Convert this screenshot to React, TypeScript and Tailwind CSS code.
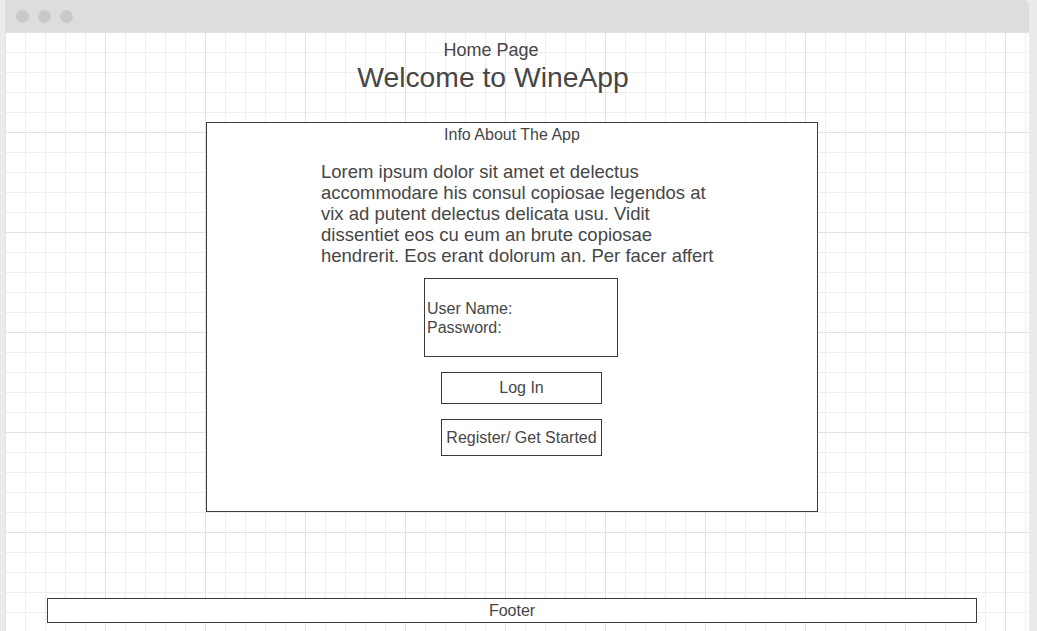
// Home page wireframe mockup (WineApp)

const lorem =
  "Lorem ipsum dolor sit amet et delectus accommodare his consul copiosae legendos at vix ad putent delectus delicata usu. Vidit dissentiet eos cu eum an brute copiosae hendrerit. Eos erant dolorum an. Per facer affert";

function TitleBar() {
  return (
    <div className="h-[32px] shrink-0 bg-[#dddddd] rounded-tr-[6px] flex items-center gap-[9px] pl-[11px]">
      <span className="w-[13px] h-[13px] rounded-full bg-[#c9c9c9]" />
      <span className="w-[13px] h-[13px] rounded-full bg-[#c9c9c9]" />
      <span className="w-[13px] h-[13px] rounded-full bg-[#c9c9c9]" />
    </div>
  );
}

export default function App() {
  return (
    <div
      className="w-[1037px] h-[631px] overflow-hidden bg-[#ebebeb] flex text-[#464646]"
      style={{ fontFamily: '"Liberation Sans", Arial, sans-serif' }}
    >
      <div className="ml-[5px] w-[1024px] h-full flex flex-col">
        <TitleBar />

        {/* ── Canvas with grid ── */}
        <div className="flex-1 flex flex-col bg-white bg-[image:linear-gradient(to_right,#e2e2e2_1px,transparent_1px),linear-gradient(to_bottom,#e2e2e2_1px,transparent_1px),linear-gradient(to_right,#eeeeee_1px,transparent_1px),linear-gradient(to_bottom,#eeeeee_1px,transparent_1px)] bg-[size:100px_100px,100px_100px,20px_20px,20px_20px]">
          {/* Header */}
          <div className="pt-[8px] flex flex-col">
            <div className="text-[18px] leading-[20px] text-center pr-[52px]">Home Page</div>
            <div className="text-[28.3px] leading-[34px] text-center pr-[48px]">Welcome to WineApp</div>
          </div>

          {/* Info box */}
          <div className="mt-[28px] ml-[201px] w-[612px] h-[390px] shrink-0 border border-[#3a3a3a] bg-white flex flex-col items-start">
            <div className="mt-[3px] w-full text-center text-[16px] leading-[18px]">Info About The App</div>

            <p className="mt-[17px] ml-[114px] w-[405px] text-[18.5px] leading-[21px]">{lorem}</p>

            <div className="mt-[12px] ml-[217px] w-[194px] h-[79px] border border-[#3a3a3a] flex flex-col justify-center pl-[2px] text-[16px] leading-[19px]">
              <div>User Name:</div>
              <div>Password:</div>
            </div>

            <button className="mt-[15px] ml-[234px] w-[161px] h-[32px] border border-[#3a3a3a] text-[16px] leading-[18px] flex items-center justify-center">
              Log In
            </button>

            <button className="mt-[15px] ml-[234px] w-[161px] h-[37px] border border-[#3a3a3a] text-[16px] leading-[18px] flex items-center justify-center">
              Register/ Get Started
            </button>
          </div>

          {/* Footer */}
          <div className="mt-[86px] ml-[42px] w-[930px] h-[25px] shrink-0 border border-[#3a3a3a] bg-white flex items-center justify-center text-[16px] leading-[18px]">
            Footer
          </div>
        </div>
      </div>
    </div>
  );
}
